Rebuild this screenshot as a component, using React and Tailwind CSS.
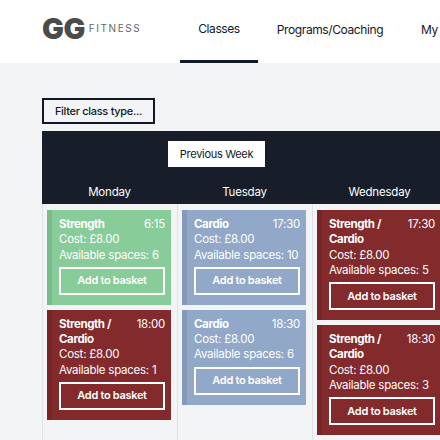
const font = { fontFamily: 'Inter, "Noto Sans", sans-serif' };

const themes = {
  green: { card: "bg-[#88cc9a]", band: "border-[#7abb8b]" },
  blue: { card: "bg-[#92a8c8]", band: "border-[#839abb]" },
  red: { card: "bg-[#832a2d]", band: "border-[#762628]" },
};

const days = [
  {
    name: "Monday",
    classes: [
      { title: "Strength", time: "6:15", spaces: 6, theme: "green" },
      { title: "Strength / Cardio", time: "18:00", spaces: 1, theme: "red" },
    ],
  },
  {
    name: "Tuesday",
    classes: [
      { title: "Cardio", time: "17:30", spaces: 10, theme: "blue" },
      { title: "Cardio", time: "18:30", spaces: 6, theme: "blue" },
    ],
  },
  {
    name: "Wednesday",
    classes: [
      { title: "Strength / Cardio", time: "17:30", spaces: 5, theme: "red" },
      { title: "Strength / Cardio", time: "18:30", spaces: 3, theme: "red" },
    ],
  },
];

function ClassCard({ title, time, spaces, theme }) {
  const t = themes[theme];
  return (
    <div className={`${t.card} ${t.band} border-l-[5px] pl-[7px] pr-[6px] pt-[7px] pb-[10px] text-white text-[11.5px] leading-[15.3px] tracking-[-0.25px]`}>
      <div className="flex justify-between gap-2">
        <span className="font-bold w-[70px] tracking-[-0.4px]">{title}</span>
        <span className="shrink-0">{time}</span>
      </div>
      <div>Cost: £8.00</div>
      <div className="whitespace-nowrap">Available spaces: {spaces}</div>
      <div className="mt-[4px] h-[28px] border-2 border-white flex items-center justify-center font-semibold text-[11px] tracking-[-0.3px]">
        Add to basket
      </div>
    </div>
  );
}

export default function App() {
  return (
    <div className="w-[440px] h-[440px] overflow-hidden bg-[#f3f4f6] text-[#111827]" style={font}>
      <header className="h-[63px] bg-white flex pl-[42px] overflow-hidden">
        <div className="w-[138px] shrink-0 flex items-center gap-[4px] text-[#4b4b4b] pb-[6px]">
          <span className="font-black text-[29px] tracking-[-0.5px] leading-none">GG</span>
          <span className="text-[10px] tracking-[1.6px] text-[#666]">FITNESS</span>
        </div>
        <nav className="flex shrink-0 text-[12px] tracking-[-0.4px] whitespace-nowrap">
          <div className="w-[78px] h-[63px] border-b-[3px] border-[#111827] flex items-center justify-center pb-[3px]">Classes</div>
          <div className="ml-[19px] w-[106px] h-[63px] flex items-center justify-center pb-[3px]">Programs/Coaching</div>
          <div className="ml-[38px] h-[63px] flex items-center pb-[3px]">My Profile</div>
        </nav>
      </header>

      <main className="pl-[42px] pt-[35px]">
        <div className="w-[113px] h-[26px] border-2 border-[#111827] flex items-center justify-center text-[11px] tracking-[-0.3px] font-medium bg-[#f3f4f6]">
          Filter class type...
        </div>

        <div className="mt-[7px] w-[405px]">
          <div className="bg-[#171e29] h-[73px] pt-[10px]">
            <div className="ml-[126px] w-[97px] h-[26px] bg-white flex items-center justify-center text-[11px] tracking-[-0.3px]">
              Previous Week
            </div>
            <div className="grid grid-cols-[135px_135px_135px] mt-[17px] text-white text-[11.5px] tracking-[-0.2px] text-center">
              {days.map((d) => (
                <div key={d.name}>{d.name}</div>
              ))}
            </div>
          </div>
          <div className="grid grid-cols-[135px_135px_135px] h-[240px]">
            {days.map((d) => (
              <div key={d.name} className="border-l border-[#dfe2e6] pl-[4px] pr-[6px] pt-[6px] flex flex-col gap-[5px]">
                {d.classes.map((c, i) => (
                  <ClassCard key={i} {...c} />
                ))}
              </div>
            ))}
          </div>
        </div>
      </main>
    </div>
  );
}
